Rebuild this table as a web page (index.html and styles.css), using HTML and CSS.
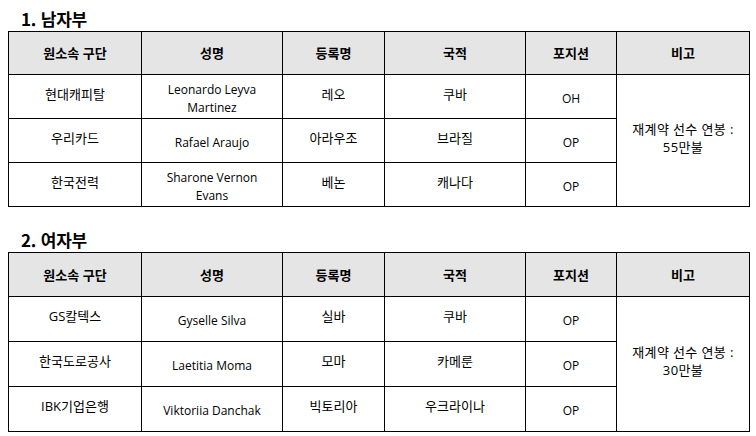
FILE: index.html
```html
<!DOCTYPE html>
<html lang="ko">
<head>
<meta charset="utf-8">
<title>외국인 선수 재계약</title>
<link rel="stylesheet" href="styles.css">
</head>
<body>
<main class="page">
  <section class="group">
    <h2 class="title">1. 남자부</h2>
    <table class="roster">
      <colgroup>
        <col class="c1"><col class="c2"><col class="c3"><col class="c4"><col class="c5"><col class="c6">
      </colgroup>
      <thead>
        <tr><th>원소속 구단</th><th>성명</th><th>등록명</th><th>국적</th><th>포지션</th><th>비고</th></tr>
      </thead>
      <tbody>
        <tr><td>현대캐피탈</td><td class="lat">Leonardo Leyva<br>Martinez</td><td>레오</td><td>쿠바</td><td class="lat">OH</td><td rowspan="3" class="note">재계약 선수 연봉 :<br>55만불</td></tr>
        <tr><td>우리카드</td><td class="lat">Rafael Araujo</td><td>아라우조</td><td>브라질</td><td class="lat">OP</td></tr>
        <tr><td>한국전력</td><td class="lat">Sharone Vernon<br>Evans</td><td>베논</td><td>캐나다</td><td class="lat">OP</td></tr>
      </tbody>
    </table>
  </section>
  <section class="group second">
    <h2 class="title">2. 여자부</h2>
    <table class="roster tall">
      <colgroup>
        <col class="c1"><col class="c2"><col class="c3"><col class="c4"><col class="c5"><col class="c6">
      </colgroup>
      <thead>
        <tr><th>원소속 구단</th><th>성명</th><th>등록명</th><th>국적</th><th>포지션</th><th>비고</th></tr>
      </thead>
      <tbody>
        <tr><td>GS칼텍스</td><td class="lat">Gyselle Silva</td><td>실바</td><td>쿠바</td><td class="lat">OP</td><td rowspan="3" class="note">재계약 선수 연봉 :<br>30만불</td></tr>
        <tr><td>한국도로공사</td><td class="lat">Laetitia Moma</td><td>모마</td><td>카메룬</td><td class="lat">OP</td></tr>
        <tr><td>IBK기업은행</td><td class="lat">Viktoriia Danchak</td><td>빅토리아</td><td>우크라이나</td><td class="lat">OP</td></tr>
      </tbody>
    </table>
  </section>
</main>
</body>
</html>
```
FILE: styles.css
```css
html, body {
  margin: 0;
  padding: 0;
  background: #ffffff;
}
body {
  font-family: "Open Sans", "Noto Sans CJK KR", sans-serif;
  color: #000;
}
.page {
  padding: 0 7px 0 8px;
}
.group.second {
  margin-top: 14px;
}
.title {
  margin: 0;
  height: 31px;
  box-sizing: border-box;
  padding: 9px 0 0 13px;
  font-family: "Noto Sans CJK KR", sans-serif;
  font-size: 17px;
  line-height: 20px;
  font-weight: 700;
  letter-spacing: -0.2px;
}
.roster {
  width: 742px;
  border-collapse: collapse;
  table-layout: fixed;
  font-size: 13px;
}
.c1 { width: 133px; }
.c2 { width: 141px; }
.c3 { width: 102px; }
.c4 { width: 141px; }
.c5 { width: 91px; }
.c6 { width: 133px; }
.roster th,
.roster td {
  border: 1px solid #000;
  text-align: center;
  vertical-align: middle;
  padding: 0 4px;
  line-height: 18px;
}
.roster th {
  background: #e5e5e5;
  font-family: "Noto Sans CJK KR", sans-serif;
  font-weight: 700;
  height: 43px;
  box-sizing: border-box;
}
.roster td {
  height: 44px;
  box-sizing: border-box;
  font-weight: 400;
  padding-bottom: 6px;
}
.roster.tall th { height: 44px; }
.roster.tall td { height: 45px; }
.roster td.lat {
  font-size: 12px;
  padding-top: 4px;
  padding-bottom: 0;
}
.roster td.note {
  line-height: 18px;
  letter-spacing: 0.4px;
  padding-bottom: 6px;
  padding-left: 2px;
  padding-right: 2px;
}
```
